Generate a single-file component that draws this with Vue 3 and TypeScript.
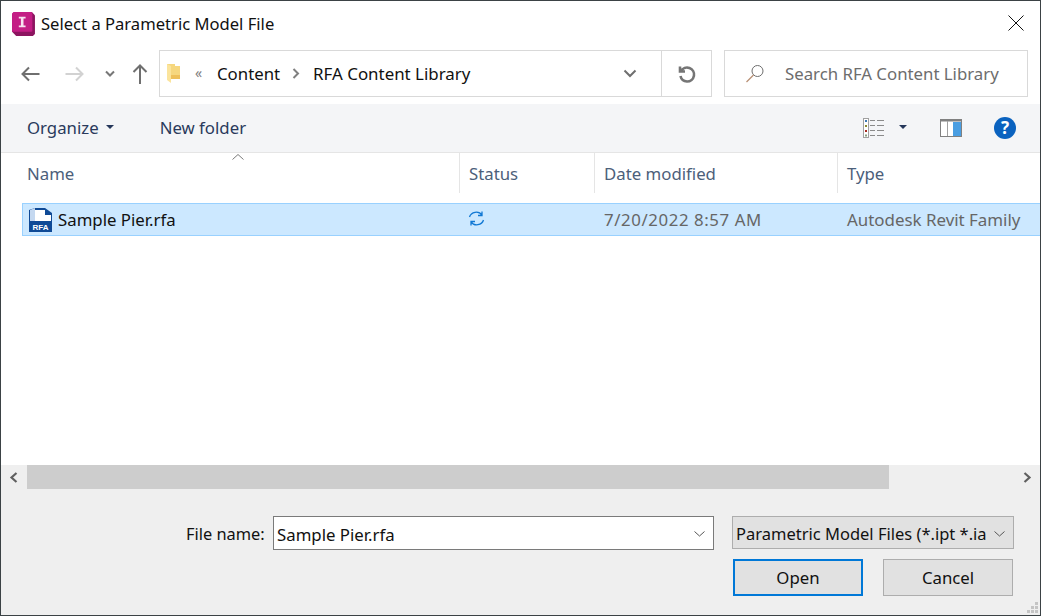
<script setup lang="ts">
interface Column { label: string; width: string }
const columns: Column[] = [
  { label: 'Name', width: '459px' },
  { label: 'Status', width: '135px' },
  { label: 'Date modified', width: '243px' },
  { label: 'Type', width: '202px' },
]
</script>

<template>
  <div class="window">
    <header class="title">
      <svg class="app" width="25" height="25" viewBox="0 0 24 24">
        <path d="M1 3 L3 1 H20 L23 4 V22 L21 24 H5 L1 20Z" fill="#8c1560"/>
        <path d="M1 2.5 L2.5 1 H19.5 Q20.5 1 20.5 2 V19 Q20.5 20 19.5 20 H1Z" fill="#c41e85"/>
        <path d="M7.5 5.5 H14 V7.2 H12 V14 H14 V15.6 H7.5 V14 H9.5 V7.2 H7.5Z" fill="#f7e3f0"/>
      </svg>
      <span class="title-text">Select a Parametric Model File</span>
      <svg class="close" width="16" height="16" viewBox="0 0 16 16"><path d="M.5.5 15.5 15.5M15.5.5 .5 15.5" stroke="#111" stroke-width="1" fill="none"/></svg>
    </header>

    <nav class="nav">
      <div class="nav-buttons">
        <svg width="20" height="16" viewBox="0 0 20 16"><path d="M9 1.5 2.5 8 9 14.5M3 8H19.5" fill="none" stroke="#6f6f6f" stroke-width="2"/></svg>
        <svg class="fwd" width="20" height="16" viewBox="0 0 20 16"><path d="M11 1.5 17.500 8 11 14.5M17 8H.5" fill="none" stroke="#d2d2d2" stroke-width="2"/></svg>
        <svg class="hist" width="10" height="7" viewBox="0 0 10 7"><path d="M1 1.5 5 5.5 9 1.5" fill="none" stroke="#777" stroke-width="2"/></svg>
        <svg class="up" width="16" height="20" viewBox="0 0 16 20"><path d="M1.5 8 8 1.5 14.5 8M8 2V20" fill="none" stroke="#6f6f6f" stroke-width="2"/></svg>
      </div>
      <div class="address">
        <svg class="folder" width="15" height="21" viewBox="0 0 15 21">
          <path d="M1 1H9V3H14V16H1Z" fill="#f6d77e"/>
          <path d="M1 1 5 3V20L1 17Z" fill="#fbe49c"/>
          <path d="M5 12H14V16H5Z" fill="#eec05a"/>
        </svg>
        <span class="chev-dbl">«</span>
        <span class="crumb">Content</span>
        <svg width="8" height="11" viewBox="0 0 8 11"><path d="M1.5 1 6 5.5 1.5 10" fill="none" stroke="#808080" stroke-width="2"/></svg>
        <span class="crumb">RFA Content Library</span>
        <svg class="addr-drop" width="14" height="9" viewBox="0 0 14 9"><path d="M1.5 1.5 7 7 12.500 1.500" fill="none" stroke="#6f6f6f" stroke-width="2"/></svg>
        <div class="refresh">
          <svg width="18" height="18" viewBox="0 0 18 18"><path d="M2 1.500V6.500H7M3 6A7 7 0 1 1 9 16.500 7 7 0 0 1 2.500 11" fill="none" stroke="#757575" stroke-width="2.600"/></svg>
        </div>
      </div>
      <div class="search">
        <svg width="20" height="20" viewBox="0 0 20 20"><circle cx="12.500" cy="7" r="5.500" fill="none" stroke="#6e6e6e" stroke-width="1"/><path d="M8.500 11 1.500 18" stroke="#b88f74" stroke-width="1.200" fill="none"/></svg>
        <span>Search RFA Content Library</span>
      </div>
    </nav>

    <div class="toolbar">
      <span class="tool organize">Organize</span>
      <span class="caret"></span>
      <span class="tool newfolder">New folder</span>
      <svg class="views" width="22" height="20" viewBox="0 0 22 20">
        <rect x=".5" y=".5" width="5" height="19" fill="#fff" stroke="#a0a0a0"/>
        <rect x="2" y="2" width="2" height="2" fill="#3c78b0"/><rect x="2" y="7" width="2" height="2" fill="#8a8a30"/><rect x="2" y="12" width="2" height="2" fill="#a82a20"/><rect x="2" y="16.500" width="2" height="2" fill="#8aa080"/>
        <path d="M7 2.500H12M14 2.500H21M7 7.500H12M14 7.500H21M7 12.500H12M14 12.500H21M7 17.500H12M14 17.500H21" stroke="#8a8a8a"/>
      </svg>
      <span class="caret views-caret"></span>
      <svg class="pane" width="22" height="18" viewBox="0 0 22 18">
        <rect x=".5" y=".5" width="21" height="17" fill="#fff" stroke="#808080"/>
        <rect x="1" y="1" width="20" height="1.500" fill="#808080"/>
        <rect x="7" y="2" width="1" height="15" fill="#a0a0a0"/>
        <rect x="13" y="3" width="8" height="14" fill="#4a9ee2"/>
      </svg>
      <div class="help">?</div>
    </div>

    <main class="list">
      <div class="sort"><svg width="12" height="6" viewBox="0 0 12 6"><path d="M.5 5.500 6 .5 11.500 5.500" fill="none" stroke="#7a7a7a"/></svg></div>
      <div class="head">
        <div v-for="c in columns" :key="c.label" class="col" :style="{ width: c.width }">{{ c.label }}</div>
      </div>
      <div class="row">
        <div class="cell name">
          <svg width="24" height="26" viewBox="0 0 24 26">
            <path d="M1 3 L7 1 H17 L24 6 V25 H1Z" fill="#0f4a96"/>
            <path d="M4 3H17V8H23V14H4Z" fill="#fff"/>
            <path d="M2 3 L7 1 V14 H2Z" fill="#c4d8f0"/>
            <text x="12.500" y="22.500" class="rfa">RFA</text>
          </svg>
          <span>Sample Pier.rfa</span>
        </div>
        <div class="cell status">
          <svg width="17" height="17" viewBox="0 0 17 17"><path d="M1.500 7A7 6.500 0 0 1 14 5M14 1.500V5.500H10M15.500 10A7 6.500 0 0 1 3 12M3 15.500V11.500H7" fill="none" stroke="#1178d4" stroke-width="1.300"/></svg>
        </div>
        <div class="cell date">7/20/2022 8:57 AM</div>
        <div class="cell type">Autodesk Revit Family</div>
      </div>
    </main>

    <div class="scrollbar">
      <div class="arrow"><svg width="10" height="11" viewBox="0 0 10 11"><path d="M7.500 1 2.500 5.500 7.500 10" fill="none" stroke="#606060" stroke-width="2.200"/></svg></div>
      <div class="thumb"></div>
      <div class="arrow right"><svg width="10" height="11" viewBox="0 0 10 11"><path d="M2.500 1 7.500 5.500 2.500 10" fill="none" stroke="#606060" stroke-width="2.200"/></svg></div>
    </div>

    <footer class="footer">
      <div class="fields">
        <label class="label">File name:</label>
        <div class="combo">
          <span>Sample Pier.rfa</span>
          <svg width="11" height="6" viewBox="0 0 11 6"><path d="M.5.5 5.500 5 10.500.5" fill="none" stroke="#555"/></svg>
        </div>
        <div class="filter">
          <span>Parametric Model Files (*.ipt *.ia</span>
          <svg width="11" height="6" viewBox="0 0 11 6"><path d="M.5.5 5.500 5 10.500.5" fill="none" stroke="#555"/></svg>
        </div>
      </div>
      <div class="actions">
        <button class="btn primary">Open</button>
        <button class="btn">Cancel</button>
      </div>
      <svg class="grip" width="11" height="11" viewBox="0 0 11 11" fill="#c4c4c4">
        <rect x="8" y="0" width="3" height="3"/><rect x="4" y="4" width="3" height="3"/><rect x="8" y="4" width="3" height="3"/><rect x="0" y="8" width="3" height="3"/><rect x="4" y="8" width="3" height="3"/><rect x="8" y="8" width="3" height="3"/>
      </svg>
    </footer>
  </div>
</template>

<style scoped>
.window {
  width: 1041px;
  height: 616px;
  box-sizing: border-box;
  border: 1px solid #3b4245;
  background: #fff;
  display: flex;
  flex-direction: column;
  font-family: "Noto Sans", "Open Sans", sans-serif;
  font-size: 16.8px;
  color: #111;
  overflow: hidden;
}
.title {
  height: 45px;
  display: flex;
  align-items: center;
  padding-left: 10px;
  flex: none;
}
.title-text { margin-left: 5px; font-size: 16.600px; }
.close { margin-left: auto; margin-right: 16px; margin-top: -2px; }
.nav {
  height: 58px;
  flex: none;
  display: flex;
  align-items: flex-start;
  padding-top: 4px;
  box-sizing: border-box;
}
.nav-buttons {
  width: 158px;
  height: 47px;
  display: flex;
  align-items: center;
  padding-left: 19px;
  box-sizing: border-box;
  flex: none;
}
.fwd { margin-left: 25px; }
.hist { margin-left: 20px; }
.up { margin-left: 17px; }
.address {
  width: 553px;
  height: 47px;
  box-sizing: border-box;
  border: 1px solid #d9d9d9;
  display: flex;
  align-items: center;
  padding-left: 6px;
  flex: none;
}
.folder { margin-top: -1px; }
.chev-dbl { color: #808080; margin-left: 14px; font-size: 14px; width: 22px; margin-top: -2px; }
.crumb { margin-right: 12px; }
.address svg + .crumb { margin-left: 13px; font-size: 16.900px; }
.addr-drop { margin-left: auto; margin-right: 24px; }
.refresh {
  width: 49px;
  height: 45px;
  border-left: 1px solid #d9d9d9;
  display: flex;
  align-items: center;
  justify-content: center;
  flex: none;
}
.search {
  margin-left: 12px;
  width: 304px;
  height: 47px;
  box-sizing: border-box;
  border: 1px solid #d9d9d9;
  display: flex;
  align-items: center;
  padding-left: 20px;
  color: #6d6d6d;
  gap: 20px;
}
.toolbar {
  height: 48px;
  flex: none;
  background: #f4f5f7;
  border-bottom: 1px solid #e5e5e5;
  display: flex;
  align-items: center;
  padding-left: 26px;
  padding-right: 24px;
  color: #25375a;
}
.tool { color: #2a3a5c; margin-top: -1px; }
.caret {
  width: 0;
  height: 0;
  border-left: 4px solid transparent;
  border-right: 4px solid transparent;
  border-top: 4px solid #25375a;
  margin-left: 7px;
  margin-top: -2px;
}
.tool.newfolder { margin-left: 46px; }
.views { margin-left: auto; }
.views-caret { margin-left: 14px; }
.pane { margin-left: 33px; margin-top: 0; }
.help {
  width: 22px;
  height: 22px;
  margin-left: 32px;
  border-radius: 50%;
  background: #0a62bf;
  color: #fff;
  font-weight: 700;
  font-size: 17px;
  line-height: 22px;
  text-align: center;
}
.list {
  flex: 1;
  position: relative;
  min-height: 0;
}
.sort { position: absolute; left: 231px; top: 1px; line-height: 0; }
.head { display: flex; height: 40px; }
.col {
  box-sizing: border-box;
  border-right: 1px solid #e5e5e5;
  padding-left: 9px;
  padding-top: 9px;
  color: #4c607a;
  flex: none;
}
.col:first-child { padding-left: 26px; }
.col:last-child { border-right: 0; }
.row {
  margin-top: 10px;
  margin-left: 21px;
  height: 33px;
  box-sizing: border-box;
  background: #cce8ff;
  border: 1px solid #99d1ff;
  border-right: 0;
  display: flex;
  align-items: center;
}
.cell { flex: none; display: flex; align-items: center; }
.name { width: 437px; padding-left: 5px; box-sizing: border-box; gap: 6px; }
.status { width: 135px; padding-left: 8px; box-sizing: border-box; margin-top: -2px; }
.date { width: 243px; padding-left: 9px; box-sizing: border-box; color: #666; letter-spacing: .6px; }
.type { padding-left: 9px; color: #666; white-space: nowrap; font-size: 16.900px; }
.rfa {
  font-family: "Liberation Sans", sans-serif;
  font-size: 8px;
  font-weight: 700;
  fill: #fff;
  text-anchor: middle;
}
.scrollbar {
  height: 24px;
  flex: none;
  background: #efefef;
  display: flex;
}
.arrow {
  width: 26px;
  flex: none;
  display: flex;
  align-items: center;
  justify-content: center;
}
.thumb { width: 862px; background: #cdcdcd; }
.arrow.right { margin-left: auto; margin-right: 0; }
.footer {
  height: 126px;
  flex: none;
  background: #efefef;
  position: relative;
  box-sizing: border-box;
  padding-top: 27px;
}
.fields { display: flex; align-items: flex-start; padding-left: 185px; }
.label { width: 87px; padding-top: 6px; line-height: 24px; white-space: nowrap; font-size: 16.400px; }
.combo {
  width: 441px;
  height: 34px;
  box-sizing: border-box;
  border: 1px solid #7a7a7a;
  background: #fff;
  display: flex;
  align-items: center;
  justify-content: space-between;
  padding: 2px 8px 0 3px;
}
.filter {
  margin-left: 18px;
  width: 282px;
  height: 33px;
  box-sizing: border-box;
  border: 1px solid #adadad;
  background: #e1e1e1;
  display: flex;
  align-items: center;
  justify-content: space-between;
  padding: 2px 8px 0 3px;
  white-space: nowrap;
  font-size: 16.500px;
}
.actions {
  display: flex;
  justify-content: flex-end;
  gap: 20px;
  margin-top: 9px;
  padding-right: 27px;
}
.btn {
  width: 130px;
  height: 37px;
  box-sizing: border-box;
  border: 1px solid #adadad;
  background: #e1e1e1;
  font: inherit;
  color: #111;
  padding: 0;
}
.btn.primary { border: 2px solid #0078d7; }
.grip { position: absolute; right: 2px; bottom: 2px; }
</style>
